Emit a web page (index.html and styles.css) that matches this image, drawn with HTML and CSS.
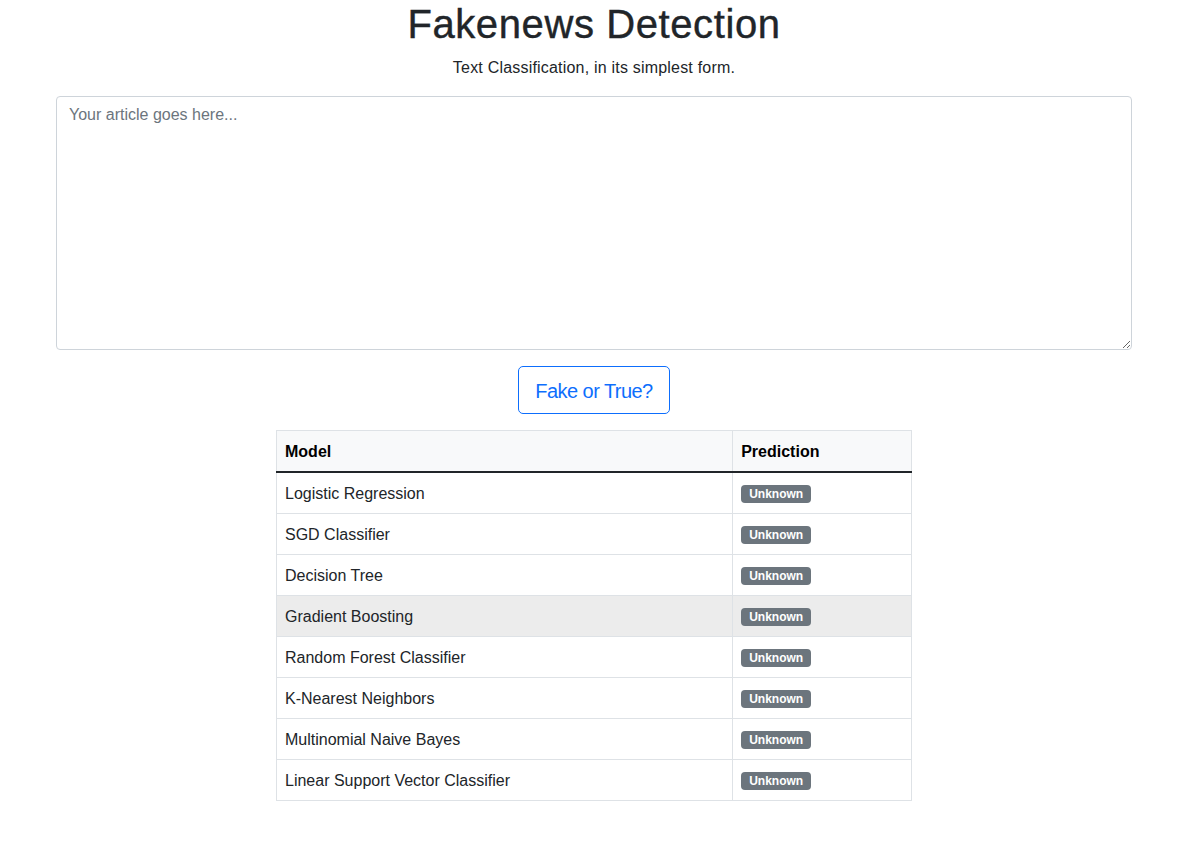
FILE: index.html
```html
<!DOCTYPE html>
<html lang="en">
<head>
<meta charset="utf-8">
<title>Fakenews Detection</title>
<link rel="stylesheet" href="styles.css">
</head>
<body>
<div class="page">
  <h1 class="title">Fakenews Detection</h1>
  <p class="subtitle">Text Classification, in its simplest form.</p>
  <textarea class="article" placeholder="Your article goes here..."></textarea>
  <div class="actions">
    <button class="btn-check" type="button">Fake or True?</button>
  </div>
  <table class="results">
    <thead>
      <tr><th class="col-model">Model</th><th class="col-pred">Prediction</th></tr>
    </thead>
    <tbody>
      <tr><td>Logistic Regression</td><td><span class="badge">Unknown</span></td></tr>
      <tr><td>SGD Classifier</td><td><span class="badge">Unknown</span></td></tr>
      <tr><td>Decision Tree</td><td><span class="badge">Unknown</span></td></tr>
      <tr class="hover"><td>Gradient Boosting</td><td><span class="badge">Unknown</span></td></tr>
      <tr><td>Random Forest Classifier</td><td><span class="badge">Unknown</span></td></tr>
      <tr><td>K-Nearest Neighbors</td><td><span class="badge">Unknown</span></td></tr>
      <tr><td>Multinomial Naive Bayes</td><td><span class="badge">Unknown</span></td></tr>
      <tr><td>Linear Support Vector Classifier</td><td><span class="badge">Unknown</span></td></tr>
    </tbody>
  </table>
</div>
</body>
</html>
```

FILE: styles.css
```css
* { box-sizing: border-box; }
html, body { margin: 0; padding: 0; background: #fff; }
body {
  font-family: "Liberation Sans", Arial, sans-serif;
  font-size: 16px;
  line-height: 1.5;
  color: #212529;
}
.page {
  width: 1188px;
  padding: 0 56px;
  display: flex;
  flex-direction: column;
  align-items: center;
}
.title {
  margin: 0 0 8px;
  font-size: 40px;
  font-weight: 500;
  line-height: 1.2;
  letter-spacing: 0.6px;
  color: #212529;
  -webkit-text-stroke: 0.4px #212529;
}
.subtitle {
  margin: 0 0 16px;
  font-size: 16px;
  line-height: 24px;
  letter-spacing: 0.2px;
}
.article {
  display: block;
  width: 1076px;
  height: 254px;
  margin: 0 0 16px;
  padding: 6px 12px;
  font-family: inherit;
  font-size: 16px;
  line-height: 1.5;
  color: #212529;
  border: 1px solid #ced4da;
  border-radius: 4px;
  resize: vertical;
  outline: none;
}
.article::placeholder { color: #6c757d; opacity: 1; }
.actions { margin: 0 0 16px; }
.btn-check {
  display: block;
  height: 48px;
  padding: 9px 16px 7px;
  font-family: inherit;
  font-size: 20px;
  line-height: 30px;
  letter-spacing: -0.55px;
  color: #0d6efd;
  background: #fff;
  border: 1px solid #0d6efd;
  border-radius: 5px;
  cursor: pointer;
}
.results {
  width: 636px;
  border-collapse: collapse;
  color: #212529;
}
.results th, .results td {
  padding: 9px 8px 7px;
  border: 1px solid #dee2e6;
  text-align: left;
  vertical-align: top;
  line-height: 24px;
}
.results thead th {
  background: #f8f9fa;
  font-weight: 700;
  color: #000;
  border-bottom: 2px solid #212529;
}
.col-model { width: 457px; }
.col-pred { width: 179px; }
.results tr.hover td { background: #ececec; }
.badge {
  display: inline-block;
  margin-top: 3px;
  padding: 3px 8px;
  font-size: 12px;
  font-weight: 700;
  line-height: 12px;
  color: #fff;
  background: #6c757d;
  border-radius: 4px;
  vertical-align: top;
}
```
